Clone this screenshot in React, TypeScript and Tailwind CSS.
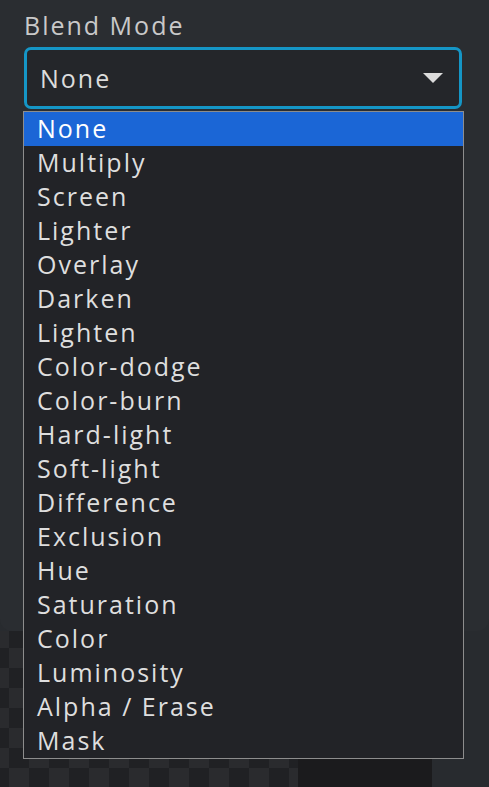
import React from "react";

const items = [
  "None","Multiply","Screen","Lighter","Overlay","Darken","Lighten","Color-dodge","Color-burn","Hard-light","Soft-light","Difference","Exclusion","Hue","Saturation","Color","Luminosity","Alpha / Erase","Mask",
];

export default function App() {
  const font = { fontFamily: '"Open Sans", "Noto Sans", sans-serif' };
  return (
    <div className="relative w-[489px] h-[787px] overflow-hidden bg-[#282b2f]" style={font}>
      <div className="h-[631px] bg-[#2a2d31] rounded-b-[12px] pt-[11px] px-[24px]">
        <div className="text-[25px] leading-[28px] tracking-[2px] font-medium text-[#c9c9c9]">Blend Mode</div>
        <div className="mt-[8px] h-[62px] w-[438px] rounded-[7px] border-[3px] border-[#1596c6] bg-[#24262a] flex items-center justify-between pl-[13px] pr-[16px]">
          <span className="text-[25px] leading-[30px] tracking-[2px] font-medium text-[#dcdcdc]">None</span>
          <svg width="20" height="10" viewBox="0 0 20 10"><path d="M0 0 L20 0 L10 10 Z" fill="#dcdcdc" /></svg>
        </div>
      </div>
      <div className="flex h-[156px]">
        <div
          className="w-[298px] h-full"
          style={{
            backgroundImage:
              "conic-gradient(#202124 25%, #2a2b2e 0 50%, #202124 0 75%, #2a2b2e 0)",
            backgroundSize: "40px 40px",
            backgroundPosition: "9px 17px",
          }}
        />
        <div className="w-[134px] h-full bg-[#1b1b1d]" />
        <div className="flex-1 h-full bg-[#282b2f]" />
      </div>
      <div className="absolute left-[23px] top-[111px] w-[441px] border border-[#8d8d8d] bg-[#222327]">
        {items.map((it, i) => (
          <div
            key={it}
            className={
              "h-[34px] flex items-center pl-[13px] pb-[3px] text-[25px] leading-[30px] tracking-[2px] font-medium " +
              (i === 0 ? "bg-[#1b66d6] text-white" : "text-[#dedede]")
            }
          >
            {it}
          </div>
        ))}
      </div>
    </div>
  );
}
